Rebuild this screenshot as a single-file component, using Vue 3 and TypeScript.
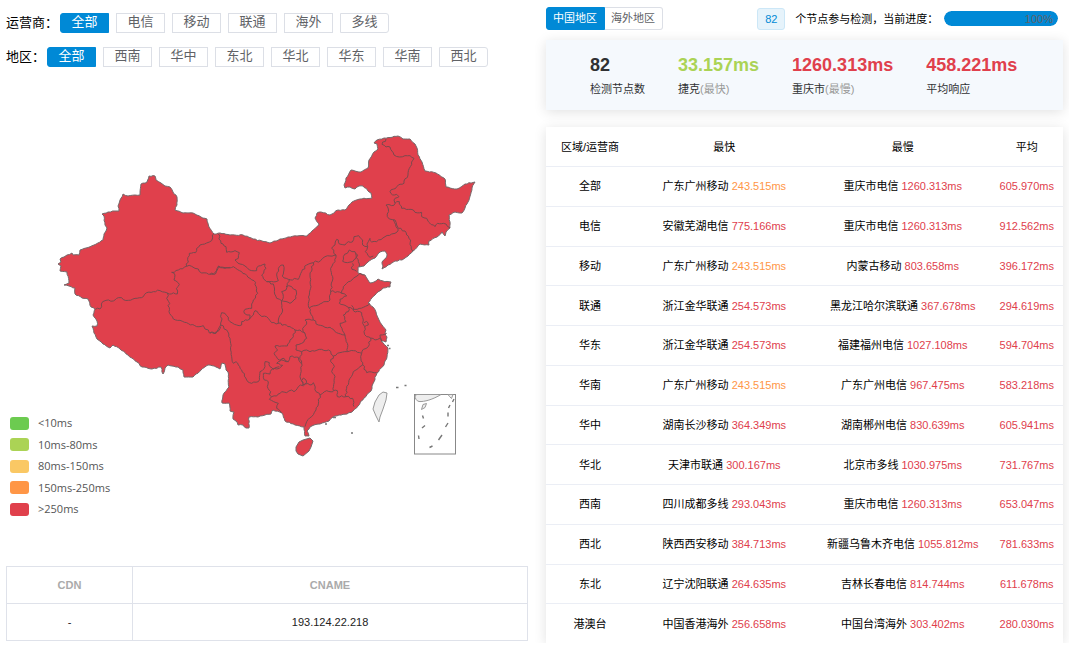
<script setup lang="ts">
import { ref } from 'vue'

interface Row {
  area: string
  fast: string
  fastMs: string
  slow: string
  slowMs: string
  avg: string
}

const carriers = ['全部', '电信', '移动', '联通', '海外', '多线']
const areas = ['全部', '西南', '华中', '东北', '华北', '华东', '华南', '西北']
const scopes = ['中国地区', '海外地区']
const carrier = ref('全部')
const area = ref('全部')
const scope = ref('中国地区')

const progress = 100

const legend = [
  { label: '<10ms', tone: 'l1' },
  { label: '10ms-80ms', tone: 'l2' },
  { label: '80ms-150ms', tone: 'l3' },
  { label: '150ms-250ms', tone: 'l4' },
  { label: '>250ms', tone: 'l5' },
]

const raw: [string, string, string, string, string, string][] = [
  ['全部', '广东广州移动', '243.515', '重庆市电信', '1260.313', '605.970'],
  ['电信', '安徽芜湖电信', '775.166', '重庆市电信', '1260.313', '912.562'],
  ['移动', '广东广州移动', '243.515', '内蒙古移动', '803.658', '396.172'],
  ['联通', '浙江金华联通', '254.573', '黑龙江哈尔滨联通', '367.678', '294.619'],
  ['华东', '浙江金华联通', '254.573', '福建福州电信', '1027.108', '594.704'],
  ['华南', '广东广州移动', '243.515', '广东广州电信', '967.475', '583.218'],
  ['华中', '湖南长沙移动', '364.349', '湖南郴州电信', '830.639', '605.941'],
  ['华北', '天津市联通', '300.167', '北京市多线', '1030.975', '731.767'],
  ['西南', '四川成都多线', '293.043', '重庆市电信', '1260.313', '653.047'],
  ['西北', '陕西西安移动', '384.713', '新疆乌鲁木齐电信', '1055.812', '781.633'],
  ['东北', '辽宁沈阳联通', '264.635', '吉林长春电信', '814.744', '611.678'],
  ['港澳台', '中国香港海外', '256.658', '中国台湾海外', '303.402', '280.030'],
]
const rows: Row[] = raw.map(([a, fast, fastMs, slow, slowMs, avg]) => ({ area: a, fast, fastMs, slow, slowMs, avg }))

const tone = (ms: string): string => (parseFloat(ms) > 250 ? 'red' : 'orange')

/* Splits every segment into short steps and nudges them sideways, so borders look naturally uneven. */
function roughen(points: string, step: number, amount: number): string {
  const pts = points.split(' ').map((p) => p.split(',').map(Number))
  const out: string[] = []
  let seed = 7
  pts.forEach(([x, y], i) => {
    out.push(`${x},${y}`)
    const next = pts[i + 1]
    if (!next) return
    const dx = next[0] - x
    const dy = next[1] - y
    const len = Math.hypot(dx, dy)
    const parts = Math.floor(len / step)
    for (let k = 1; k < parts; k++) {
      seed = (seed * 16807) % 2147483647
      const shift = ((seed / 2147483647) * 2 - 1) * amount
      const t = k / parts
      out.push(`${(x + dx * t - (dy / len) * shift).toFixed(1)},${(y + dy * t + (dx / len) * shift).toFixed(1)}`)
    }
  })
  return out.join(' ')
}

const outline =
  '58,264 61,262 60,259 64,257 67,255 72,253 73,255 79,255 80,250 86,248 94,245 103,240 104,234 106,231 107,228 105,225 104,216 102,214 108,212 115,211 119,211 118,206 120,200 123,194 128,196 135,195 140,195 141,184 147,182 149,176 155,176 156,180 161,183 165,186 170,187 173,192 177,197 177,205 175,210 183,213 193,213 201,217 207,219 209,227 214,234 220,233 230,235 243,235 253,239 262,241 270,243 280,239 288,237 297,236 307,236 312,231 319,225 315,218 317,213 321,212 330,215 338,210 345,210 349,205 352,202 360,199 372,198 371,193 363,186 359,186 355,189 350,187 345,188 344,185 346,178 351,170 355,171 361,172 368,168 369,160 374,152 378,149 377,144 374,143 377,140 384,138 398,136 403,139 410,139 415,144 417,148 418,155 422,162 425,171 436,173 445,179 446,187 450,188 457,189 465,184 475,182 472,188 468,202 465,208 462,213 455,212 449,215 450,222 450,228 446,232 445,236 442,232 437,237 429,241 429,245 420,244 413,251 408,256 402,260 395,261 388,265 382,269 383,266 382,262 386,258 387,254 385,251 380,252 375,258 368,262 364,266 358,267 358,273 365,275 370,283 374,282 378,279 383,281 391,282 390,287 383,288 375,295 368,303 373,307 376,312 379,320 382,325 386,330 385,333 387,337 386,342 381,341 388,348 387,357 384,365 377,373 372,386 371,391 364,398 358,406 353,411 347,414 339,415 333,417 329,421 320,424 314,425 310,427 307,431 309,436 305,436 304,427 295,425 285,421 282,413 273,410 271,414 265,415 258,417 249,417 249,428 246,428 243,425 238,425 236,421 233,419 234,412 230,411 229,403 222,403 223,395 229,387 228,372 226,370 225,364 222,363 220,369 216,367 208,365 201,370 193,377 184,377 183,370 178,367 168,365 165,368 163,374 161,367 152,369 142,367 137,362 128,355 120,349 113,345 110,348 103,344 97,339 94,333 92,326 97,326 97,321 93,315 95,309 91,307 88,299 82,298 75,294 75,288 69,286 64,285 69,283 67,272 60,271 61,266'

const coast = roughen(outline, 2, 0.5)

/* Provincial borders, grouped by region; each group uses its own tripled grid. */
const borders = [
  {
    id: 'west',
    move: 'translate(50 165) scale(0.33333)',
    lines: [
      '136,433 150,432 158,410 168,406 190,408 205,398 215,398 220,404 235,406 255,400 280,395 290,383 310,380 330,377 352,384 382,387 379,370 388,358 378,348 372,345 375,330 365,322 385,315 410,304',
      '410,304 418,265 437,263 440,250 450,240 470,234 485,227 487,210 492,206',
      '410,304 425,304 435,310 445,312 455,324 490,328 500,318 505,303 525,308 540,307',
      '352,384 355,392 350,400 356,410 357,440 370,462 390,466 410,473 440,485 460,482 465,492 475,495 478,504 498,505 512,485',
    ],
  },
  {
    id: 'centre',
    move: 'translate(210 220) scale(0.33333)',
    lines: [
      '25,42 33,70 48,80 50,97 75,92 88,98 85,115 75,120 90,132 105,138 118,150 140,152 145,138 165,132 168,145 155,165 170,185 205,182 200,165 208,140 220,135 222,150 217,168 235,178 265,178 275,155 290,135 310,128',
      '170,185 190,192 193,215 200,235 215,242 220,230 215,215 228,210 232,190 238,178',
      '228,200 245,200 258,210 258,235 240,250 215,242 218,270 205,300 205,310 185,308 175,295 150,285 135,272 130,285 118,298',
      '0,163 18,160 25,140 45,145 70,140 95,155 120,175 132,182 140,205 143,220 130,240 125,265 105,268 103,280 120,285 118,298 95,305 95,315 80,315 60,305 45,280 35,278 32,315 20,335 0,340',
      '32,315 50,330 60,355 62,370 65,410 70,430 78,425 85,435 95,450 110,480 125,490 145,485 150,455 165,440 165,425 178,428 180,440 190,448 208,440',
      '205,310 240,320 255,330 270,330 285,340',
      '310,128 300,165 303,200 298,225 295,250 300,275 308,290 310,300 285,300 290,312 278,325 285,340',
      '310,128 332,122 345,110 360,108 378,105 375,125 362,145 368,170 362,215 360,240 325,255 297,265',
      '378,105 365,85 375,75 380,58 385,60 388,72 405,75 415,65 427,66 432,50 446,47 458,60 458,75 473,80 466,95 480,112 490,108',
      '473,80 475,65 480,55 485,66 500,65 525,50 545,42 555,40 565,30 558,20 550,0',
      '400,110 412,100 418,90 435,95 438,115 428,125 412,128 398,124 400,110',
      '438,100 445,125 448,140',
      '428,130 426,148 440,154',
      '362,215 382,215 395,220 400,200 410,190 430,175 450,160 460,166',
      '395,220 410,228 390,238 388,250 405,256 415,262 435,268 460,262 480,250',
      '415,262 415,275 400,285 408,305 390,310 396,325 405,345 412,370 412,395',
      '310,300 325,315 345,322 360,322 385,340 405,345',
      '425,256 430,272 455,278 460,300 458,310 464,320 475,315 470,304 462,308',
      '464,320 462,335 470,350 482,354 495,360 510,354 515,363 510,345 530,340',
      '482,354 475,380 460,388 455,400 430,392 412,395 390,398 370,408',
      '370,408 362,394 335,388 300,395 290,390 275,395 258,390 258,375 275,370 290,355 285,340',
      '255,330 250,350 240,360 232,378 215,378 195,378 203,390 192,400 208,420 235,425 240,410 265,412 275,432',
      '275,395 270,410 275,430 272,460 270,470 280,490',
      '235,425 222,415 205,425 200,430 218,436 208,445 185,448 180,462 160,460 163,480 175,485 172,500 182,515 178,525 185,530',
      '280,474 288,480 286,492 278,494 275,482 280,474',
      '286,492 265,500 252,515 245,510 230,518 215,515 200,528 185,530 178,538 205,550 200,565 215,578',
      '286,492 300,495 310,488 318,515 328,520 330,525 350,512 370,515',
      '370,408 362,425 373,440 365,455 375,470 370,512 382,512 382,530 408,530',
      '408,530 410,505 420,475 430,455 450,440 458,435 452,410 455,400',
      '458,435 470,458 485,456 500,458',
      '408,530 428,535 432,560',
      '330,525 326,545 318,570 305,590 290,605 285,620',
    ],
  },
  {
    id: 'northeast',
    move: 'translate(300 125) scale(0.33333)',
    lines: [
      '258,42 246,58 258,66 270,66 282,90 298,96 315,92 330,92 342,100 328,130 324,150 312,168 312,175 290,185 270,200 278,210 290,208 297,215 282,225 285,235',
      '285,235 298,230 305,250 340,255 345,262 365,262 365,275 380,280 385,290 405,305 412,295 430,295 450,308',
      '285,235 275,242 258,240 265,252 262,275 268,282 285,285 290,300 295,310',
      '295,310 315,318 320,330 332,345 330,358 338,378',
    ],
  },
].map((g) => ({ ...g, lines: g.lines.map((l) => roughen(l, 6, 3)) }))
</script>

<template>
  <main class="page">
    <section class="left">
      <div class="filter">
        <span class="filter-label">运营商：</span>
        <div class="choices" role="group" aria-label="运营商">
          <button v-for="c in carriers" :key="c" type="button" :class="{ on: carrier === c }" @click="carrier = c">{{ c }}</button>
        </div>
      </div>
      <div class="filter">
        <span class="filter-label">地区：</span>
        <div class="choices" role="group" aria-label="地区">
          <button v-for="a in areas" :key="a" type="button" :class="{ on: area === a }" @click="area = a">{{ a }}</button>
        </div>
      </div>

      <div class="map">
        <svg viewBox="6 67 522 499" aria-hidden="true">
          <polygon class="land" :points="coast" />
          <g v-for="g in borders" :key="g.id" :transform="g.move" class="borders">
            <polyline v-for="l in g.lines" :key="l" :points="l" />
          </g>
          <polygon class="land" points="296,447 299,442 303,440 310,438 313,441 311,447 309,451 303,456 298,454 296,451" />
          <polygon class="isle" points="383,392 387,393 386,400 383,409 380,417 379,422 376,416 373,409 375,402 379,395" />
          <g class="dots">
            <path d="M396 387.500h2.500M404.500 385.500h2M351 433h2M387 345.500h2M389 348.500h1.500M333 417.500h3M325 424h2" />
          </g>
          <rect class="inset" x="414.500" y="394.500" width="41" height="59.500" />
          <path class="isle" d="M415 395.500l2-1h24c-8 5-17 7.500-22 7-2.500-.5-4-3-4-6zM448 394.500h5l-1.500 4-2-2zM423 404.500l3.500-1-1.500 4-3.500 2z" />
          <path class="dashes" d="M422.500 415.500l1 3M422 428l3-2.500M418.500 435.500l.5 3.500M429.500 447.500l3-1.500M438.500 440l3.500-5M445.500 427l2.500-4M448 416.500v-4M448.500 408l1.500-3M452.500 402l1.500-3" />
        </svg>
        <ul class="legend">
          <li v-for="l in legend" :key="l.tone"><i :class="l.tone"></i>{{ l.label }}</li>
        </ul>
      </div>

      <table class="cname">
        <thead>
          <tr><th scope="col" class="cdn">CDN</th><th scope="col">CNAME</th></tr>
        </thead>
        <tbody>
          <tr><td>-</td><td>193.124.22.218</td></tr>
        </tbody>
      </table>
    </section>

    <section class="right">
      <div class="bar">
        <div class="tabs" role="group" aria-label="检测地区">
          <button v-for="s in scopes" :key="s" type="button" :class="{ on: scope === s }" @click="scope = s">{{ s }}</button>
        </div>
        <span class="tag">82</span>
        <span class="status">个节点参与检测，当前进度：</span>
        <div class="track" role="progressbar" aria-label="当前进度" :aria-valuenow="progress" aria-valuemin="0" aria-valuemax="100">
          <div class="fill" :style="{ width: progress + '%' }">{{ progress }}%</div>
        </div>
      </div>

      <div class="summary">
        <div><strong>82</strong><p>检测节点数</p></div>
        <div><strong class="green">33.157ms</strong><p>捷克<span>(最快)</span></p></div>
        <div><strong class="red">1260.313ms</strong><p>重庆市<span>(最慢)</span></p></div>
        <div><strong class="red">458.221ms</strong><p>平均响应</p></div>
      </div>

      <table class="results">
        <thead>
          <tr>
            <th scope="col" class="c1">区域/运营商</th>
            <th scope="col" class="c2">最快</th>
            <th scope="col" class="c3">最慢</th>
            <th scope="col" class="c4">平均</th>
          </tr>
        </thead>
        <tbody>
          <tr v-for="r in rows" :key="r.area">
            <td>{{ r.area }}</td>
            <td>{{ r.fast }} <span :class="tone(r.fastMs)">{{ r.fastMs }}ms</span></td>
            <td>{{ r.slow }} <span :class="tone(r.slowMs)">{{ r.slowMs }}ms</span></td>
            <td><span :class="tone(r.avg)">{{ r.avg }}ms</span></td>
          </tr>
        </tbody>
      </table>
    </section>
  </main>
</template>

<style>
body {
  margin: 0;
  background: #fff;
}
</style>

<style scoped>
.page {
  display: grid;
  grid-template-columns: 522fr 517fr;
  gap: 18px;
  align-items: start;
  padding: 0 6px;
  font-family: "Liberation Sans", Arial, "Noto Sans CJK SC", sans-serif;
  font-size: 11px;
  line-height: 16px;
  color: #000;
}
button {
  font-family: inherit;
  background: #fff;
  border: 1px solid #dcdfe6;
  color: #606266;
  margin: 0;
  cursor: pointer;
  white-space: nowrap;
}
button.on {
  background: #0089d6;
  border-color: #0089d6;
  color: #fff;
}
.left {
  padding-top: 13px;
}
.filter {
  display: flex;
  align-items: center;
  height: 20px;
  font-size: 13px;
  gap: 2px;
}
.filter + .filter {
  margin-top: 14px;
}
.filter-label {
  white-space: nowrap;
}
.choices {
  display: flex;
  gap: 7px;
}
.choices button {
  width: 49px;
  height: 20px;
  padding: 0 0 2px;
  font-size: 13px;
  line-height: 16px;
}
.choices button:first-child {
  border-radius: 3px 0 0 3px;
}
.choices button:last-child {
  border-radius: 0 3px 3px 0;
}
.map {
  position: relative;
}
.map svg {
  display: block;
  width: 100%;
  height: auto;
}
.land {
  fill: #e0404c;
  stroke: #75686a;
  stroke-width: 1;
  stroke-linejoin: round;
}
.borders polyline {
  fill: none;
  stroke: #7a484c;
  stroke-width: 3;
  stroke-linejoin: round;
}
.isle {
  fill: #eee;
  stroke: #999;
  stroke-width: 1;
}
.inset {
  fill: none;
  stroke: #888;
  stroke-width: 1;
}
.dots path,
.dashes {
  fill: none;
  stroke: #777;
  stroke-width: 1.4;
}
.legend {
  position: absolute;
  left: 4px;
  bottom: 50px;
  height: 100px;
  margin: 0;
  padding: 0;
  list-style: none;
  display: flex;
  flex-direction: column;
  justify-content: space-between;
  font-family: "Open Sans", "Noto Sans", sans-serif;
  color: #555;
}
.legend li {
  display: flex;
  align-items: center;
  gap: 9px;
  height: 14px;
  line-height: 14px;
}
.legend i {
  width: 19px;
  height: 13px;
  border-radius: 3px;
}
.l1 { background: #6ccb50; }
.l2 { background: #abd355; }
.l3 { background: #fac864; }
.l4 { background: #ff9646; }
.l5 { background: #e0404c; }
table {
  width: 100%;
  table-layout: fixed;
  border-collapse: collapse;
  text-align: center;
}
th,
td {
  padding: 0;
}
.cname th,
.cname td {
  height: 36px;
  border: 1px solid #dfe2ea;
}
.cname th {
  color: #aaa;
}
.cname td {
  color: #222;
}
.cname .cdn {
  width: 24%;
}
.right {
  padding-top: 7px;
}
.bar {
  display: flex;
  align-items: center;
  height: 23px;
}
.tabs {
  display: flex;
  margin-right: auto;
}
.tabs button {
  height: 23px;
  padding: 0 7px 1px 6px;
  font-size: 11px;
  line-height: 16px;
}
.tabs button:first-child {
  border-radius: 3px 0 0 3px;
}
.tabs button:last-child {
  border-left: 0;
  border-radius: 0 3px 3px 0;
}
.tag {
  box-sizing: border-box;
  width: 28px;
  height: 22px;
  line-height: 20px;
  text-align: center;
  color: #0089d6;
  background: #e6f3fb;
  border: 1px solid #cce7f7;
  border-radius: 3px;
}
.status {
  margin: 0 6px 0 10px;
  white-space: nowrap;
}
.track {
  width: 22%;
  height: 15px;
  margin-right: 5px;
  border-radius: 8px;
  background: #ebeef5;
  overflow: hidden;
}
.fill {
  box-sizing: border-box;
  height: 15px;
  padding-right: 5px;
  border-radius: 8px;
  background: #0089d6;
  color: #606266;
  line-height: 16px;
  text-align: right;
}
.summary {
  display: flex;
  gap: 33px;
  margin-top: 10px;
  padding: 14px 0 13px 44px;
  background: #f5f9fd;
  box-shadow: 0 2px 12px rgba(0, 0, 0, 0.12);
  color: #303133;
  white-space: nowrap;
}
.summary strong {
  display: block;
  font-size: 18px;
  line-height: 22px;
}
.summary p {
  margin: 5px 0 0;
}
.summary p span {
  color: #999;
}
.results {
  height: 516px;
  margin-top: 17px;
  box-shadow: 0 2px 12px rgba(0, 0, 0, 0.12);
  background: #fff;
}
.results th {
  height: 39px;
  font-weight: normal;
}
.results td {
  height: 36px;
  border-top: 1px solid #ebeef5;
}
.c1 { width: 17%; }
.c2 { width: 35%; }
.c3 { width: 34%; }
.c4 { width: 14%; }
.red,
.summary .red {
  color: #e0404c;
}
.orange {
  color: #ff9646;
}
.summary .green {
  color: #abd355;
}
</style>
